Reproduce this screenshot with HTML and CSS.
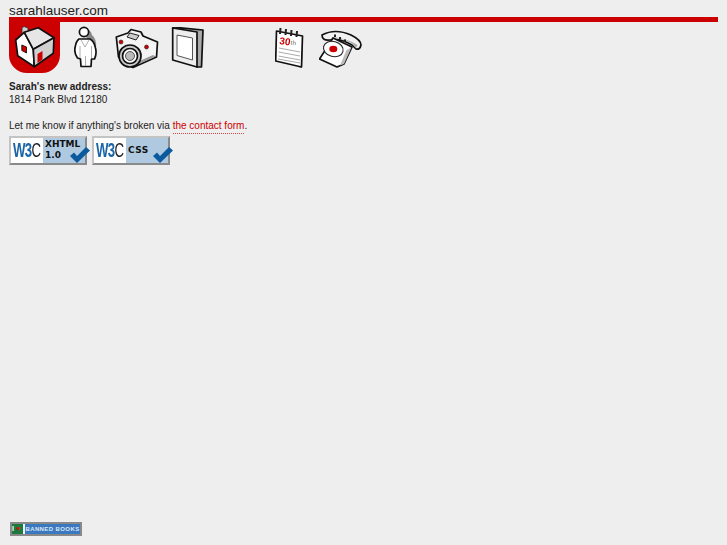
FILE: index.html
```html
<!DOCTYPE html>
<html lang="en">
<head>
  <meta charset="UTF-8">
  <title>sarahlauser.com</title>
  <link rel="stylesheet" href="styles.css">
</head>
<body>

<div class="page">
  <div class="site-title">sarahlauser.com</div>

  <div class="nav">
    <a class="nav-item nav-home" href="#">
      <svg width="51" height="51" viewBox="0 0 51 51">
        <path class="chimney" d="M13 11 L13 6 L15 4.500 L19 6 L19 11 Z"/>
        <path class="ln" fill="#fff" d="M15.300 10.300 L6.700 18 L8.700 33.700 L25.300 44.700 L24.300 27.300 Z"/>
        <path class="ln" fill="#e6e6e6" d="M15.300 10.300 L29.300 5.700 L45 15.700 L24.300 27.300 Z"/>
        <path class="ln" fill="#d0d0d0" d="M24.300 27.300 L45 15.700 L44.300 31.300 L25.300 44.700 Z"/>
        <path fill="#c00" stroke="#000" stroke-width=".8" d="M12.800 23 L17.500 25 L17.500 31 L12.800 28.500 Z"/>
        <path fill="#c00" d="M28.500 32 L33.500 29 L33.500 37.500 L28.500 41 Z"/>
      </svg>
    </a>
    <a class="nav-item nav-person" href="#">
      <svg width="24" height="43" viewBox="0 0 24 43">
        <path fill="#888" d="M10 3 Q17 3 18 9 Q23 13 22 22 L14 22 L12 8 Z"/>
        <circle class="ln" cx="10" cy="6" r="4.600" fill="#fff"/>
        <path class="ln" fill="#fff" d="M5 13 L16 13 Q20 15 21.500 22 Q23 28 20.500 33 L17.500 33 L17 40.500 L7 40.500 L6.500 33 L3.500 32 Q0 27 1 22 Q2 15 5 13 Z"/>
        <path d="M7 14 L11 21 L15 14 M6 20 L6 32 M17.500 20 L17.500 32 M11.500 30 L11.500 40" fill="none" stroke="#999" stroke-width=".8"/>
      </svg>
    </a>
    <a class="nav-item nav-camera" href="#">
      <svg width="44" height="41" viewBox="0 0 44 41">
        <path class="ln" fill="#f4f4f4" d="M1.300 9 L13 5 L16 1.500 L26 4 L28 8 L42.500 14 L41.500 29 L18 39.500 L3.500 29 Z"/>
        <path fill="#999" d="M8 30 L18 36 L38 27 L40.500 28.500 L18 38.500 L5 29 Z"/>
        <path fill="#ccc" stroke="#222" stroke-width="1" d="M15 5 L24 7.500 L21 12 L12 9 Z"/>
        <circle cx="6" cy="14" r="2" fill="#c00" stroke="#222" stroke-width=".6"/>
        <circle cx="31.500" cy="19" r="2" fill="#c00" stroke="#222" stroke-width=".6"/>
        <circle class="ln" cx="15" cy="28" r="11" fill="#ccc"/>
        <circle class="ln" cx="15" cy="28" r="7.500" fill="#fff"/>
        <circle cx="15" cy="28" r="4.500" fill="#bbb" stroke="#333" stroke-width=".8"/>
      </svg>
    </a>
    <a class="nav-item nav-book" href="#">
      <svg width="33" height="42" viewBox="0 0 33 42">
        <path class="ln" fill="#aaa" d="M1.700 1 L9 .8 L32 3 L30.500 40 L26 40 Z"/>
        <path class="ln" fill="#eee" d="M1.700 1 L26 5 L26 40 L1.700 33 Z"/>
        <path fill="#fff" stroke="#555" stroke-width="1" d="M6 8 L21.500 11 L21.500 33 L6 28.500 Z"/>
      </svg>
    </a>
    <a class="nav-item nav-notebook" href="#">
      <svg width="29" height="44" viewBox="0 0 29 44">
        <path fill="#999" d="M24 12 L28 11 L27 42 L23 41 Z"/>
        <path class="ln" fill="#fff" d="M1.500 5 L27.500 10 L26.500 41 L.7 35 Z"/>
        <path fill="none" stroke="#222" stroke-width="2" d="M5 8 L5.500 2 M10.500 9 L11 3 M16 10 L16.500 4 M21.500 11 L22 5"/>
        <path fill="none" stroke="#aaa" stroke-width="1" d="M4 22 L25 26 M3.500 26 L25 30 M3.500 30 L25 34 M3 33 L25 37"/>
        <text class="cal-date" x="4" y="18" transform="rotate(8 4 18)">30<tspan class="cal-suffix" dy="-1">th</tspan></text>
      </svg>
    </a>
    <a class="nav-item nav-phone" href="#">
      <svg width="44" height="40" viewBox="0 0 44 40">
        <path class="ln" fill="#f2f2f2" d="M3 5 Q16 -2 32 5 Q42 10 42 15 Q41 20 37 19 L33 15 Q22 8 11 10 Q3 11 3 5 Z"/>
        <path fill="#aaa" d="M12 8.500 Q24 7 34 14 L37 18 L38.500 15 Q30 9 14 7 Z"/>
        <path class="ln" fill="#fff" d="M14 8 L33 17 L25 34 L18 37 L.5 29 Z"/>
        <path fill="#bbb" d="M32.500 17.500 L25 34 L21 35.500 L27.500 20 Z"/>
        <path d="M16 7 L16 4.500 M21 9.500 L21 7 M26 12 L26 9.500" fill="none" stroke="#222" stroke-width="2"/>
        <ellipse cx="14.300" cy="19" rx="10" ry="7.500" fill="#fff" stroke="#222" stroke-width="1.100" transform="rotate(15 14.300 19)"/>
        <ellipse cx="14.300" cy="19" rx="4" ry="3.300" fill="#c00"/>
      </svg>
    </a>
  </div>

  <div class="info">
    <p><strong>Sarah's new address:</strong><br>1814 Park Blvd 12180</p>
    <p>Let me know if anything's broken via <a class="contact-link" href="#">the contact form</a>.</p>
  </div>

  <div class="badges">
    <a class="badge" href="#">
      <span class="badge-logo"><span class="logo-text"><span class="w3">W3</span><span class="w3-c">C</span></span></span>
      <span class="badge-label">XHTML<br>1.0</span>
      <svg class="badge-check" width="21" height="17" viewBox="0 0 21 17"><path d="M1 10 L5 6.500 L8 10 L17 1 L21 4.500 L8 17 Z"/></svg>
    </a>
    <a class="badge" href="#">
      <span class="badge-logo"><span class="logo-text"><span class="w3">W3</span><span class="w3-c">C</span></span></span>
      <span class="badge-label badge-label-css">CSS</span>
      <svg class="badge-check" width="21" height="17" viewBox="0 0 21 17"><path d="M1 10 L5 6.500 L8 10 L17 1 L21 4.500 L8 17 Z"/></svg>
    </a>
  </div>

  <a class="banned" href="#">
    <span class="banned-love">I <span class="heart">♥</span></span>
    <span class="banned-text">BANNED BOOKS</span>
  </a>
</div>

</body>
</html>
```

FILE: styles.css
```css
* { margin: 0; padding: 0; box-sizing: border-box; }
html, body { height: 100%; }
body {
  font-family: "Liberation Sans", Arial, sans-serif;
  font-size: 10px;
  line-height: 13px;
  color: #222;
  background-color: #eee;
}
a { text-decoration: none; }
.page {
  display: flex;
  flex-direction: column;
  align-items: flex-start;
  min-height: 100%;
  padding: 5px 9px 9px;
}
.site-title {
  font-size: 13.5px;
  line-height: 12px;
  color: #222;
}
.nav {
  display: flex;
  align-items: flex-start;
  align-self: stretch;
  border-top: 5px solid #c00;
}
.nav-item { display: block; }
.nav-item svg { display: block; filter: blur(.3px); }
.nav-home {
  width: 51px;
  height: 51px;
  background-color: #c00;
  border-radius: 0 0 18px 18px;
}
.nav-person { margin: 4px 0 0 14px; }
.nav-camera { margin: 6px 0 0 17px; }
.nav-book { margin: 5px 0 0 12px; }
.nav-notebook { margin: 4px 0 0 71px; }
.nav-phone { margin: 8px 0 0 15px; }
.ln {
  stroke: #111;
  stroke-width: 1.7;
  stroke-linejoin: round;
}
.chimney { fill: #ccc; stroke: #333; stroke-width: .8; }
.cal-date {
  font-size: 10px;
  font-weight: bold;
  fill: #c00;
}
.cal-suffix { font-size: 6px; fill: #999; }
.info { margin-top: 7px; }
.info p { margin-bottom: 13px; }
.info p:last-child { margin-bottom: 0; }
.contact-link {
  color: #c00;
  padding-bottom: 2px;
  border-bottom: 1px dotted #d44;
}
.badges {
  display: flex;
  gap: 5px;
  margin-top: 4px;
}
.badge {
  position: relative;
  display: flex;
  width: 78px;
  height: 29px;
  border: 2px solid;
  border-color: #c4c4c4 #8a8a8a #8a8a8a #c4c4c4;
  background-color: #afcae0;
}
.badge-logo {
  display: flex;
  align-items: center;
  justify-content: center;
  width: 32px;
  background-color: #fff;
}
.logo-text {
  font-size: 20px;
  font-weight: bold;
  letter-spacing: -1px;
  transform: scaleX(.66);
  white-space: nowrap;
}
.w3 { color: #1a65a8; }
.w3-c { color: #222; font-weight: normal; }
.badge-label {
  display: flex;
  align-items: center;
  padding: 0 0 1px 2px;
  font-family: "DejaVu Sans", sans-serif;
  font-size: 9px;
  line-height: 11px;
  font-weight: bold;
  color: #111;
}
.badge-label-css { letter-spacing: .5px; }
.badge-check {
  position: absolute;
  right: -5px;
  bottom: 0;
  fill: #0c5a9e;
}
.banned {
  display: flex;
  gap: 2px;
  margin: auto 0 0 1px;
  width: 72px;
  height: 14px;
  border: 2px solid #888;
  background-color: #eee;
}
.banned-love {
  width: 11px;
  background-color: #1b7a3c;
  color: #fff;
  font-size: 7px;
  line-height: 10px;
  font-weight: bold;
  white-space: nowrap;
}
.heart { color: #d11; }
.banned-text {
  flex: 1;
  background-color: #3a78c0;
  color: #dde8f4;
  font-size: 6px;
  line-height: 10px;
  font-weight: bold;
  letter-spacing: .4px;
  text-align: center;
  white-space: nowrap;
}
```
